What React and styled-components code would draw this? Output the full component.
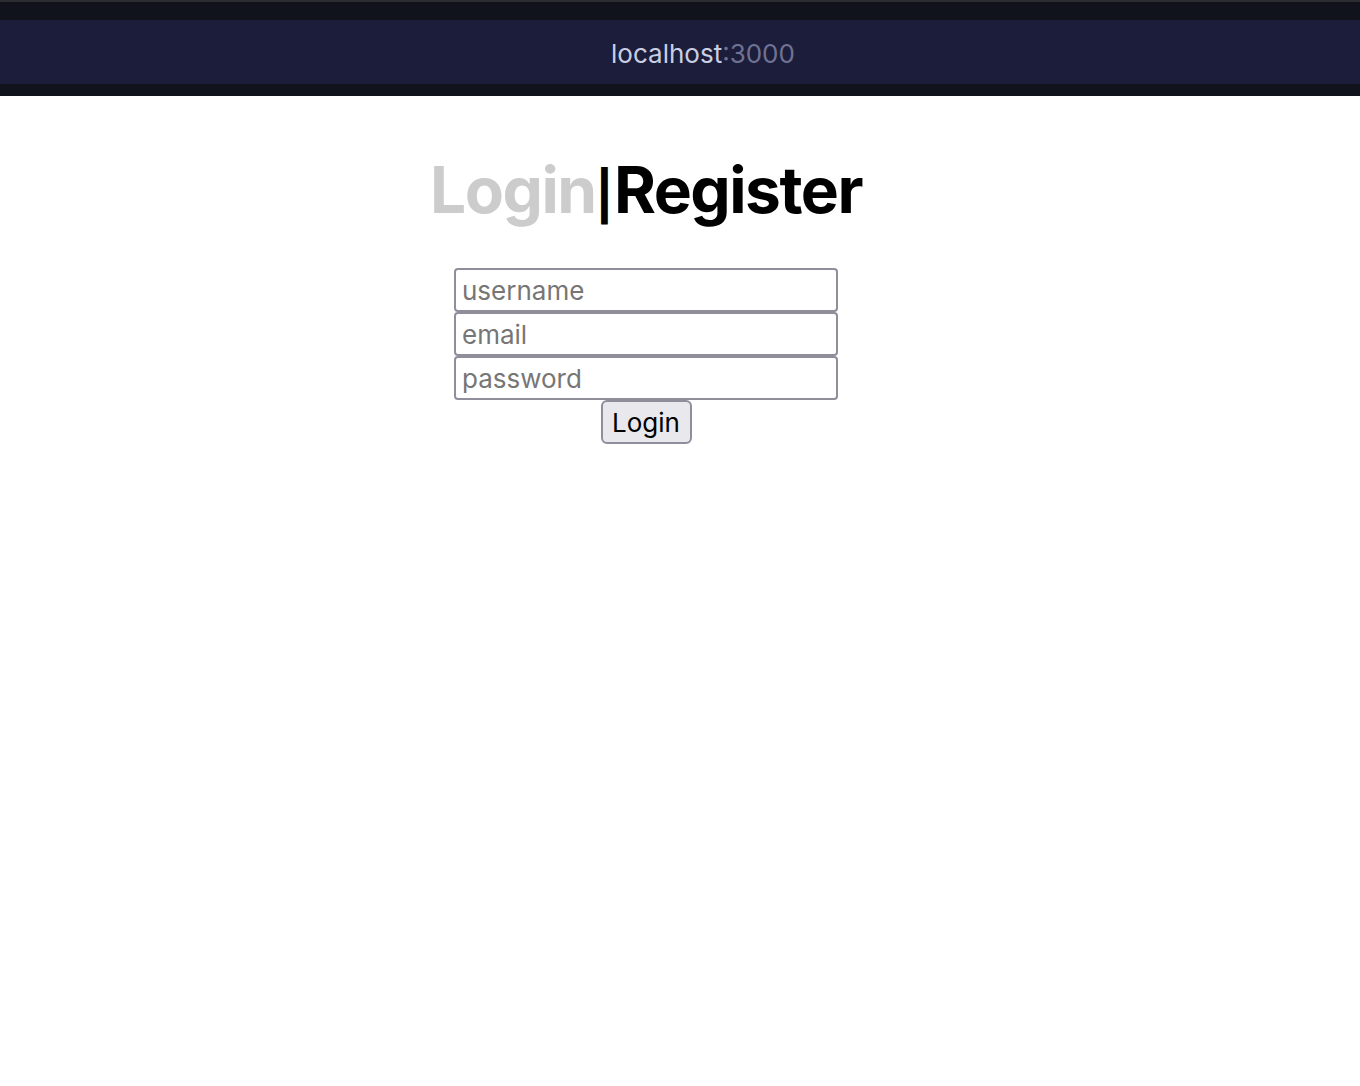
import styled, { createGlobalStyle } from "styled-components";

const GlobalStyle = createGlobalStyle`
  body {
    margin: 0;
    background: #ffffff;
    font-family: Inter, "Noto Sans", sans-serif;
  }
`;

const TopBar = styled.div`
  height: 96px;
  background: #10131c;
  border-top: 2px solid #2c2d33;
  box-sizing: border-box;
  display: flex;
  flex-direction: column;
  padding-top: 18px;
`;

const AddressBar = styled.div`
  height: 64px;
  box-sizing: border-box;
  background: #1c1d3a;
  display: flex;
  align-items: center;
  justify-content: center;
  padding: 3px 0 0 46px;
  font-size: 26px;
  color: #c9cee2;
`;

const Port = styled.span`
  color: #6f7292;
`;

const Main = styled.main`
  width: 1292px;
  display: flex;
  flex-direction: column;
  align-items: center;
  padding-top: 54px;
`;

const Title = styled.h1`
  margin: 0 0 38px;
  font-size: 64px;
  font-weight: 700;
  letter-spacing: -1.5px;
  line-height: 80px;
`;

const Tab = styled.span`
  color: ${(p) => (p.$active ? "#000000" : "#cccccc")};
`;

const Divider = styled.span`
  font-size: 48px;
  line-height: 0;
  color: #000000;
  margin: 0 2px 0 0;
`;

const Form = styled.form`
  display: flex;
  flex-direction: column;
  align-items: center;
`;

const Input = styled.input`
  width: 384px;
  height: 44px;
  box-sizing: border-box;
  border: 2px solid #8f8e9a;
  border-radius: 4px;
  padding: 0 6px;
  font-family: Inter, "Noto Sans", sans-serif;
  font-size: 26px;
  color: #000;

  &::placeholder {
    color: #767676;
  }
`;

const Button = styled.button`
  height: 44px;
  width: 91px;
  box-sizing: border-box;
  background: #e9e9ed;
  border: 2px solid #8f8e9a;
  border-radius: 6px;
  font-family: Inter, "Noto Sans", sans-serif;
  font-size: 26px;
  color: #000;
  padding: 0;
`;

export default function App() {
  return (
    <>
      <GlobalStyle />
      <TopBar>
        <AddressBar>
          localhost<Port>:3000</Port>
        </AddressBar>
      </TopBar>
      <Main>
        <Title>
          <Tab>Login</Tab>
          <Divider>|</Divider>
          <Tab $active>Register</Tab>
        </Title>
        <Form onSubmit={(e) => e.preventDefault()}>
          <Input placeholder="username" />
          <Input placeholder="email" />
          <Input type="password" placeholder="password" />
          <Button type="submit">Login</Button>
        </Form>
      </Main>
    </>
  );
}
